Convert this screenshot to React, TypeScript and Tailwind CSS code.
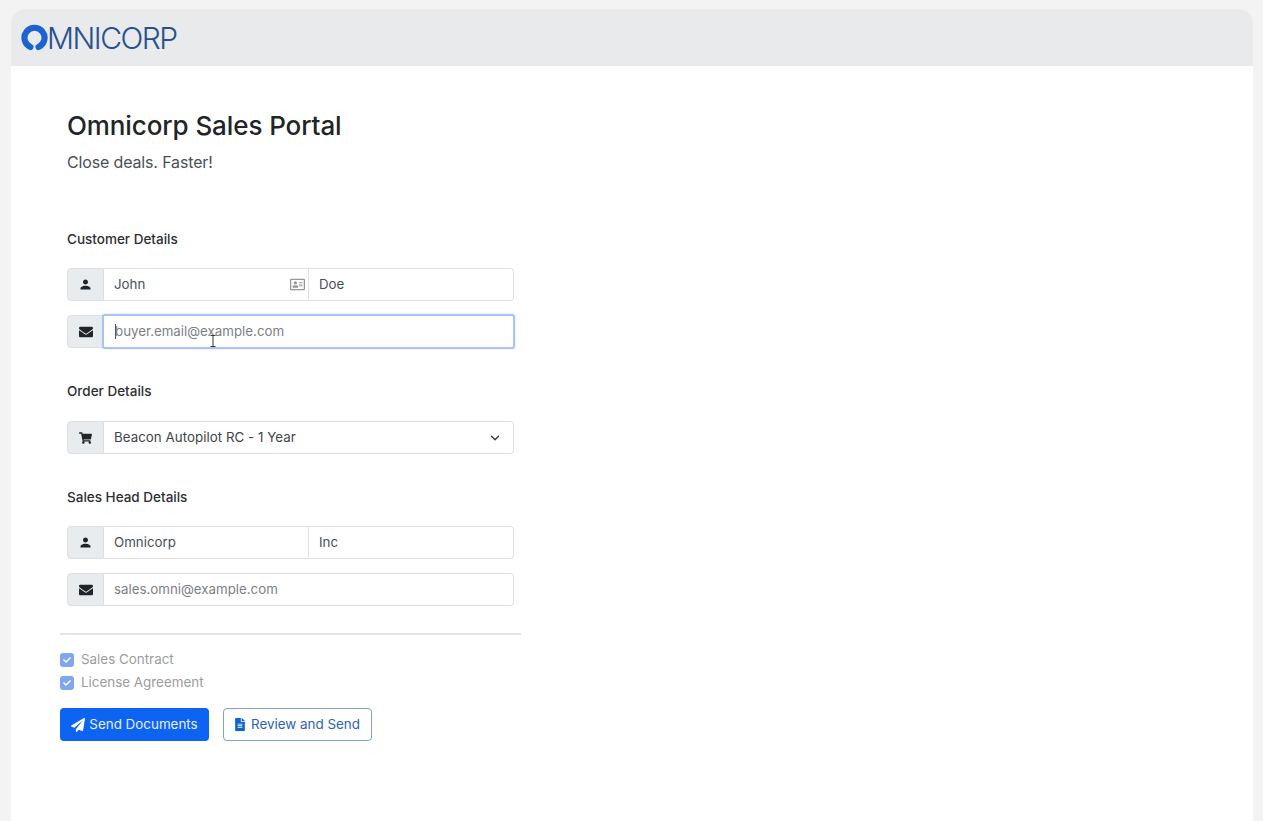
import type { ReactNode } from "react";
import { FaEnvelope, FaPaperPlane, FaShoppingCart, FaFileAlt, FaRegAddressCard, FaCheck } from "react-icons/fa";
import { MdPerson } from "react-icons/md";
import { LuChevronDown } from "react-icons/lu";

function Addon({ children }: { children: ReactNode }) {
  return (
    <div className="flex w-[37px] shrink-0 items-center justify-center rounded-l-[4px] border border-[#dcdfe2] bg-[#e9ecef] text-[#212529]">
      {children}
    </div>
  );
}

function Field({ children, className = "" }: { children: ReactNode; className?: string }) {
  return (
    <div className={`flex h-full min-w-0 items-center border border-l-0 border-[#e0e3e6] bg-white pl-[10px] text-[13.3px] ${className}`}>
      {children}
    </div>
  );
}

function NameRow({ first, last, card }: { first: string; last: string; card?: boolean }) {
  return (
    <div className="flex h-[33px] w-[447px]">
      <Addon>
        <MdPerson className="h-[15px] w-[15px]" />
      </Addon>
      <Field className="w-[205px] justify-between pr-[3px] text-[#495057]">
        <span>{first}</span>
        {card && <FaRegAddressCard className="h-[15px] w-[15px] text-[#95989b]" />}
      </Field>
      <Field className="flex-1 rounded-r-[4px] text-[#495057]">{last}</Field>
    </div>
  );
}

function EmailRow({ placeholder }: { placeholder: string }) {
  return (
    <div className="flex h-[33px] w-[447px]">
      <Addon>
        <FaEnvelope className="h-[14px] w-[14px]" />
      </Addon>
      <Field className="flex-1 rounded-r-[4px] text-[#7d8185]">{placeholder}</Field>
    </div>
  );
}

function Label({ children }: { children: ReactNode }) {
  return <h3 className="text-[13.5px] leading-[16px] font-medium text-[#2b2f33]">{children}</h3>;
}

function Check({ label }: { label: string }) {
  return (
    <div className="flex h-[23px] items-center gap-[7px] text-[13.4px] text-[#9a9da0]">
      <span className="flex h-[14px] w-[14px] items-center justify-center rounded-[3px] bg-[#7fa6ee] text-white">
        <FaCheck className="h-[8px] w-[8px]" />
      </span>
      {label}
    </div>
  );
}

export default function App() {
  return (
    <div className="h-[821px] overflow-hidden bg-[#f3f3f3] pt-[9px] pr-[10px] pl-[11px] font-['Inter',sans-serif]">
      <div className="h-[812px] rounded-t-[14px] bg-white">
        <header className="flex h-[57px] items-center rounded-t-[14px] bg-[#e9eaeb] pl-[10px]">
          <svg viewBox="0 0 28 28" className="h-[27px] w-[27px]" fill="none">
            <path d="M9.8 23.8A10.4 10.4 0 1 1 18.2 23.8" stroke="#1b63d0" strokeWidth="6.4" strokeLinecap="round" />
          </svg>
          <span className="-ml-[1px] text-[30px] leading-none font-light tracking-[-1.5px] text-[#26508f]">MNICORP</span>
        </header>

        <main className="pt-[43px] pl-[49px]">
          <div className="pl-[7px]">
            <h1 className="text-[26px] leading-[34px] font-medium tracking-[-0.1px] text-[#212529]">Omnicorp Sales Portal</h1>
            <p className="mt-[8px] text-[16px] leading-[22px] tracking-[-0.15px] text-[#495057]">Close deals. Faster!</p>

            <div className="mt-[58px]">
              <Label>Customer Details</Label>
            </div>
            <div className="mt-[21px]">
              <NameRow first="John" last="Doe" card />
            </div>
            <div className="relative mt-[14px]">
              <div className="flex h-[33px] w-[447px]">
                <Addon>
                  <FaEnvelope className="h-[14px] w-[14px]" />
                </Addon>
                <div className="z-10 -my-[1px] -mr-[1px] -ml-[2px] flex flex-1 items-center rounded-[3px] border-2 border-[#a9c4f2] bg-white pl-[11px] text-[13.3px] text-[#7d8185] shadow-[0_0_2px_#c6d8f8]">
                  <span className="mr-[-1px] h-[15px] w-[1px] bg-[#495057]" />
                  buyer.email@example.com
                </div>
              </div>
              {/* text cursor over the field */}
              <svg viewBox="0 0 8 12" className="absolute top-[20px] left-[142px] z-20 h-[12px] w-[8px]" fill="none" stroke="#33373b" strokeWidth="1">
                <path d="M1.5 .5h5M4 .5v11M1.5 11.5h5" />
              </svg>
            </div>

            <div className="mt-[35px]">
              <Label>Order Details</Label>
            </div>
            <div className="mt-[22px] flex h-[33px] w-[447px]">
              <Addon>
                <FaShoppingCart className="h-[12px] w-[13px]" />
              </Addon>
              <Field className="flex-1 justify-between rounded-r-[4px] pr-[11px] tracking-[0.05px] text-[#3f4449]">
                <span>Beacon Autopilot RC - 1 Year</span>
                <LuChevronDown className="h-[14px] w-[14px] text-[#343a40]" strokeWidth={2.4} />
              </Field>
            </div>

            <div className="mt-[35px]">
              <Label>Sales Head Details</Label>
            </div>
            <div className="mt-[21px]">
              <NameRow first="Omnicorp" last="Inc" />
            </div>
            <div className="mt-[14px]">
              <EmailRow placeholder="sales.omni@example.com" />
            </div>
          </div>

          <hr className="mt-[27px] w-[461px] border-t-2 border-[#e4e5e6]" />

          <div className="mt-[13px]">
            <Check label="Sales Contract" />
            <Check label="License Agreement" />
          </div>

          <div className="mt-[14px] flex gap-[14px] text-[13.4px]">
            <button className="flex h-[33px] w-[149px] items-center justify-center gap-[4px] rounded-[4px] bg-[#0d63f2] text-[#e8effc]">
              <FaPaperPlane className="h-[14px] w-[14px] text-white" />
              Send Documents
            </button>
            <button className="flex h-[33px] w-[149px] items-center justify-center gap-[6px] rounded-[4px] border border-[#7f9fd6] bg-white text-[#2d62b8]">
              <FaFileAlt className="h-[13px] w-[10px] text-[#0d63d8]" />
              Review and Send
            </button>
          </div>
        </main>
      </div>
    </div>
  );
}
